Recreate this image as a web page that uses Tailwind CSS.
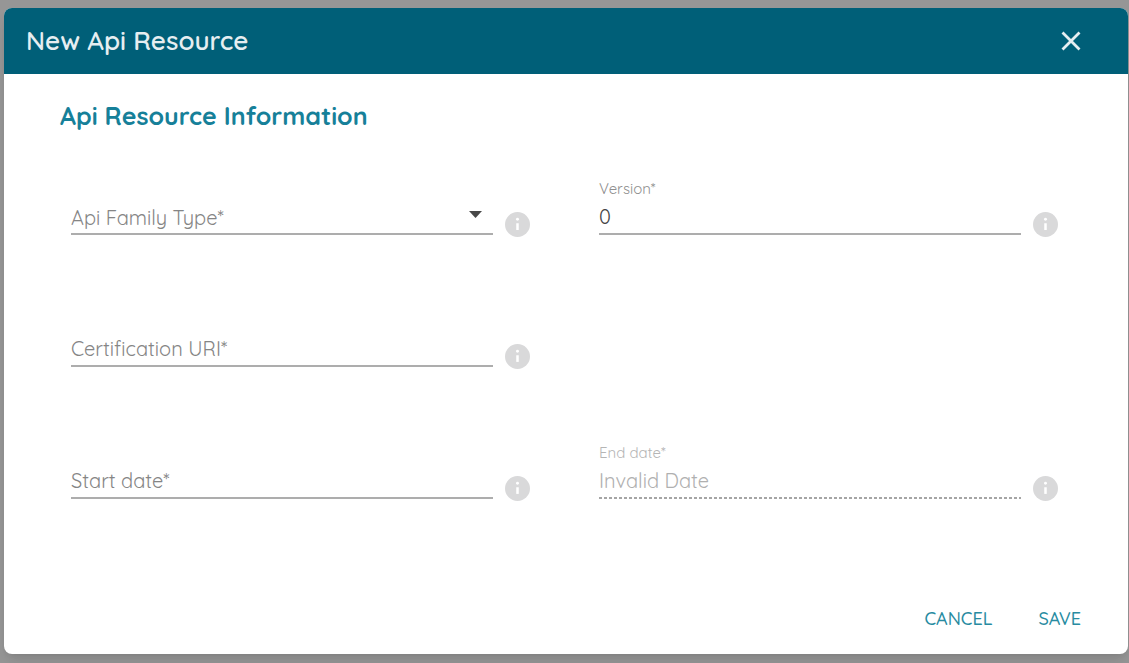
<!DOCTYPE html>
<html lang="en">
<head>
<meta charset="utf-8">
<meta name="viewport" content="width=device-width, initial-scale=1">
<title>New Api Resource</title>
<script src="https://cdn.jsdelivr.net/npm/@tailwindcss/browser@4"></script>
</head>
<body class="min-h-screen bg-[#969696] pt-2 pr-px pb-2 pl-1 font-['Quicksand','Lato',sans-serif]">
<svg class="hidden" aria-hidden="true">
  <symbol id="info" viewBox="0 0 24 24"><circle cx="12" cy="12" r="12" fill="#d9d9da"/><circle cx="12" cy="7" r="1.4" fill="#fff"/><path d="M12 10.8v6.4" stroke="#fff" stroke-width="2.4"/></symbol>
</svg>
<main role="dialog" aria-labelledby="title" class="overflow-hidden rounded-lg bg-white shadow-lg">
  <header class="flex h-[66px] items-center justify-between bg-[#005f78] pr-[45px] pb-px pl-[22px] text-[#e6eef1]">
    <h1 id="title" class="text-[26px] leading-8 font-semibold">New Api Resource</h1>
    <button type="button" aria-label="Close" class="flex size-6 items-center justify-center">
      <svg class="size-5" viewBox="0 0 20 20" fill="none" stroke="currentColor" stroke-width="2.8"><path d="M1.500 1.500l17 17M18.500 1.500l-17 17"/></svg>
    </button>
  </header>
  <form class="pt-[26px]">
    <h2 class="px-14 text-[25px] leading-8 font-bold text-[#168099]">Api Resource Information</h2>
    <div class="mt-12 grid grid-cols-2 gap-x-[69px] pr-[70px] pl-[67px] text-[20px] text-[#444]">
      <div class="flex h-[132px] items-start gap-3">
        <div class="relative mt-[23px] flex-1">
          <select aria-label="Api Family Type" class="block h-8 w-full appearance-none border-b-2 border-[#adadad] bg-transparent pb-[3px] text-[#858585] outline-none">
            <option>Api Family Type*</option>
          </select>
          <svg class="pointer-events-none absolute top-2 right-[11px] h-[7px] w-[13px]" viewBox="0 0 13 7"><path d="M0 0h13L6.500 7z" fill="#484848"/></svg>
        </div>
        <button type="button" aria-label="About Api Family Type" class="mt-8 size-[25px] shrink-0"><svg class="size-full"><use href="#info"/></svg></button>
      </div>
      <div class="flex h-[132px] items-start gap-3">
        <div class="flex-1">
          <label for="version" class="block h-[23px] pt-px text-[15px] leading-4 text-[#8f8f8f]">Version*</label>
          <input id="version" value="0" class="block h-8 w-full border-b-2 border-[#adadad] pb-[3px] outline-none">
        </div>
        <button type="button" aria-label="About Version" class="mt-8 size-[25px] shrink-0"><svg class="size-full"><use href="#info"/></svg></button>
      </div>
      <div class="flex h-[132px] items-start gap-3">
        <input aria-label="Certification URI" placeholder="Certification URI*" class="mt-[23px] block h-8 min-w-0 flex-1 border-b-2 border-[#adadad] pb-[3px] outline-none placeholder:text-[#858585]">
        <button type="button" aria-label="About Certification URI" class="mt-8 size-[25px] shrink-0"><svg class="size-full"><use href="#info"/></svg></button>
      </div>
      <div></div>
      <div class="flex h-[132px] items-start gap-3">
        <input aria-label="Start date" placeholder="Start date*" class="mt-[23px] block h-8 min-w-0 flex-1 border-b-2 border-[#adadad] pb-[3px] outline-none placeholder:text-[#858585]">
        <button type="button" aria-label="About Start date" class="mt-8 size-[25px] shrink-0"><svg class="size-full"><use href="#info"/></svg></button>
      </div>
      <div class="flex h-[132px] items-start gap-3">
        <div class="flex-1">
          <label for="end" class="block h-[23px] pt-px text-[15px] leading-4 text-[#b5b5b5]">End date*</label>
          <input id="end" value="Invalid Date" disabled class="block h-[30px] w-full pb-[3px] text-[#b0b0b0]">
          <div class="h-[2px] bg-[repeating-linear-gradient(90deg,#a5a5a5_0_3px,transparent_3px_5px)]"></div>
        </div>
        <button type="button" aria-label="About End date" class="mt-8 size-[25px] shrink-0"><svg class="size-full"><use href="#info"/></svg></button>
      </div>
    </div>
    <div class="flex justify-end gap-[46px] pt-[26px] pr-[47px] pb-[18px] text-[18px] leading-[34px] font-medium text-[#288ba1]">
      <button type="button">CANCEL</button>
      <button type="submit">SAVE</button>
    </div>
  </form>
</main>
</body>
</html>
